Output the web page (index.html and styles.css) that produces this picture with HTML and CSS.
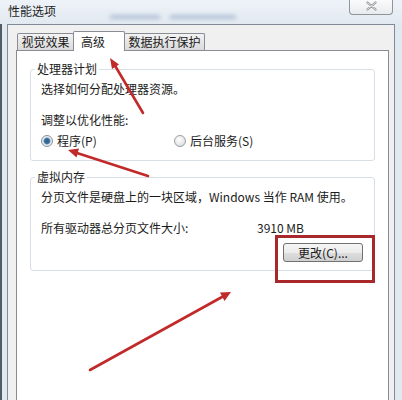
FILE: index.html
```html
<!DOCTYPE html>
<html lang="zh-CN">
<head>
<meta charset="utf-8">
<title>性能选项</title>
<link rel="stylesheet" href="styles.css">
</head>
<body>
<div class="screen">
  <div class="titlebar">
    <span class="title">性能选项</span>
    <span class="blur blur-a"></span>
    <span class="blur blur-b"></span>
    <div class="close">
      <svg width="11" height="10" viewBox="0 0 11 10"><path d="M1.5 1.5 L9.5 8.5 M9.5 1.5 L1.5 8.5" stroke="#8f9296" stroke-width="2.2" stroke-linecap="round" fill="none"/><path d="M1.5 1.5 L9.5 8.5 M9.5 1.5 L1.5 8.5" stroke="#f4f4f4" stroke-width="0.8" stroke-linecap="round" fill="none"/></svg>
    </div>
  </div>
  <div class="dialog">
    <div class="tabs">
      <div class="tab tab-1">视觉效果</div>
      <div class="tab tab-active">高级</div>
      <div class="tab tab-3">数据执行保护</div>
    </div>
    <div class="page">
      <fieldset class="group group-cpu">
        <legend>处理器计划</legend>
        <div class="line desc">选择如何分配处理器资源。</div>
        <div class="line sub">调整以优化性能:</div>
        <div class="line radios">
          <label class="opt opt-first"><span class="radio checked"></span>程序(P)</label>
          <label class="opt"><span class="radio"></span>后台服务(S)</label>
        </div>
      </fieldset>
      <fieldset class="group group-mem">
        <legend>虚拟内存</legend>
        <div class="line desc">分页文件是硬盘上的一块区域，Windows 当作 RAM 使用。</div>
        <div class="line size-row"><span class="size-label">所有驱动器总分页文件大小:</span><span>3910 MB</span></div>
        <div class="btn-row"><button class="btn">更改(C)...</button></div>
      </fieldset>
    </div>
  </div>
  <svg class="overlay" width="402" height="400" viewBox="0 0 402 400">
    <rect x="276.5" y="236.5" width="97" height="45" fill="none" stroke="#a8282c" stroke-width="3"/>
    <g stroke="#c22a2a" stroke-width="2.6" stroke-linecap="round" fill="none">
      <line x1="143" y1="113" x2="115.5" y2="66.5"/>
      <line x1="148" y1="176" x2="77" y2="153"/>
      <line x1="90" y1="370" x2="222" y2="297"/>
    </g>
    <g fill="#c22a2a">
      <polygon points="110,58 119,64.5 112,69"/>
      <polygon points="68,150 79,148.5 76.5,157.5"/>
      <polygon points="231,292 224.5,301 220,292.5"/>
    </g>
  </svg>
</div>
</body>
</html>
```

FILE: styles.css
```css
* { box-sizing: border-box; }

body {
  margin: 0;
  width: 402px;
  height: 400px;
  overflow: hidden;
  font-family: "Noto Sans CJK SC", "Noto Sans", sans-serif;
  font-size: 12px;
  color: #1b1b1b;
}

.screen {
  position: relative;
  width: 402px;
  height: 400px;
  overflow: hidden;
  background: linear-gradient(to right, #535c62 0, #535c62 2px, #dfe9ef 2px, #dfe9ef 100%);
}

.titlebar {
  position: relative;
  height: 24px;
  display: flex;
  justify-content: space-between;
  align-items: flex-start;
  padding: 0 9px 0 8px;
  background: linear-gradient(#eef3f8, #e2e9f0);
}

.title {
  margin-top: 4px;
  line-height: 14px;
  font-size: 12px;
  color: #1e1e1e;
}

.blur {
  position: absolute;
  height: 4px;
  top: 15px;
  background: #8da2c2;
  filter: blur(2px);
  opacity: 0.6;
}
.blur-a { left: 110px; width: 50px; }
.blur-b { left: 170px; width: 66px; }

.close {
  width: 44px;
  height: 15px;
  border: 1px solid #90949b;
  border-top: none;
  border-radius: 0 0 4px 4px;
  background: linear-gradient(#fbfbfc, #e8ebee);
  display: flex;
  align-items: center;
  justify-content: center;
  padding-bottom: 2px;
}

.dialog {
  margin-left: 7px;
  width: 388px;
  height: 376px;
  border: 1px solid #7f8b97;
  border-bottom: none;
  background: #f0f0f0;
  padding: 6px 0 0 8px;
}

.tabs {
  position: relative;
  z-index: 1;
  display: flex;
  align-items: flex-end;
  height: 19px;
  padding-left: 1px;
}

.tab {
  height: 17px;
  border: 1px solid #898c95;
  border-bottom: none;
  border-radius: 2px 2px 0 0;
  background: linear-gradient(#f3f3f3, #dadada);
  text-align: center;
  line-height: 15px;
  margin-right: -1px;
  font-size: 12px;
}

.tab-1 { width: 57px; }
.tab-3 { width: 81px; }

.tab-active {
  width: 52px;
  height: 20px;
  margin-bottom: -1px;
  background: #fff;
  text-align: left;
  padding: 2px 0 0 7px;
  position: relative;
  z-index: 2;
}

.page {
  width: 373px;
  height: 360px;
  border: 1px solid #898c95;
  background: #fff;
  padding-top: 11px;
}

.group {
  margin: 0 13px;
  border: 1px solid #d5dfe5;
  border-radius: 3px;
  padding: 0 10px 11px;
  min-width: 0;
}

.group-mem {
  margin-top: 9px;
  padding-bottom: 8px;
}

legend {
  padding: 0 2px;
  margin-left: -6px;
  line-height: 14px;
}

.line {
  line-height: 16px;
  white-space: nowrap;
}

.desc { margin-top: 5px; }
.sub { margin-top: 15px; }
.radios { margin-top: 5px; display: flex; }
.size-row { margin-top: 15px; display: flex; }
.size-label { width: 216px; }

.opt {
  display: flex;
  align-items: center;
}
.opt-first { width: 133px; }

.radio {
  width: 12px;
  height: 12px;
  border-radius: 50%;
  border: 1px solid #9a9ea3;
  background: radial-gradient(circle at 40% 35%, #ffffff 0, #e6e6e6 60%, #cfd2d5 100%);
  margin-right: 4px;
  position: relative;
}

.radio.checked {
  border-color: #8a8f96;
  background: radial-gradient(circle at 50% 50%, #2f5e86 0, #3b6f9a 2.5px, #9fc0da 3.5px, #eef2f5 4px, #dcdfe2 100%);
}

.btn-row {
  margin-top: 7px;
  display: flex;
  justify-content: flex-end;
  padding-right: 1px;
}

.btn {
  width: 80px;
  height: 19px;
  border: 1px solid #707070;
  border-radius: 3px;
  background: linear-gradient(#f6f6f6 0%, #ececec 50%, #dedede 51%, #d0d0d0 100%);
  font-family: "Noto Sans CJK SC", "Noto Sans", sans-serif;
  font-size: 12px;
  line-height: 15px;
  color: #1b1b1b;
  padding: 0;
  text-align: center;
}

.overlay {
  position: absolute;
  left: 0;
  top: 0;
  pointer-events: none;
}
```
